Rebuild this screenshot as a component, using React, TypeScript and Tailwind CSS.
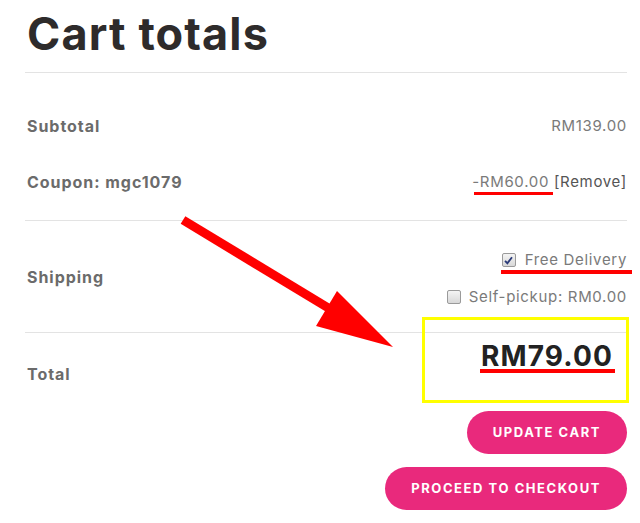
const labelCls = 'text-[16px] font-bold tracking-[0.06em] text-[#6b6b6b]'
const valueCls = 'text-[15px] tracking-[0.045em] text-[#7a7a7a]'

function Checkbox({ checked }: { checked?: boolean }) {
  return (
    <span className="flex h-[14px] w-[14px] items-center justify-center border border-[#9a9a9a] bg-gradient-to-b from-[#f4f4f4] to-[#d8d8d8] rounded-[2px]">
      {checked && (
        <svg viewBox="0 0 12 12" className="h-[11px] w-[11px]">
          <path d="M2.2 6.3 L4.8 9 L9.8 2.4" fill="none" stroke="#2a3a78" strokeWidth="2" />
        </svg>
      )}
    </span>
  )
}

function PinkButton({ children }: { children: React.ReactNode }) {
  return (
    <button className="h-[43px] rounded-full bg-[#e9297c] px-[26px] text-[13px] font-bold uppercase tracking-[0.12em] text-white">
      {children}
    </button>
  )
}

export default function App() {
  return (
    <div
      className="relative h-[523px] w-[640px] overflow-hidden bg-white"
      style={{ fontFamily: 'Inter, "Open Sans", sans-serif' }}
    >
      <div className="pl-[25px] pr-[13px]">
        <div className="flex h-[72px] items-center pl-[2px]">
          <h1 className="text-[45px] font-bold leading-none tracking-[0.025em] text-[#2e2b2b] mt-[-6px]">
            Cart totals
          </h1>
        </div>
        <div className="h-px bg-[#e3e3e3]" />

        <div className="pt-[25px] pb-[10px]">
          <div className="flex h-[56px] items-center justify-between pl-[2px]">
            <span className={labelCls}>Subtotal</span>
            <span className={valueCls}>RM139.00</span>
          </div>
          <div className="flex h-[56px] items-center justify-between pl-[2px]">
            <span className={labelCls}>Coupon: mgc1079</span>
            <span className={valueCls}>
              -RM60.00 <span className="text-[#555]">[Remove]</span>
            </span>
          </div>
        </div>
        <div className="h-px bg-[#e3e3e3]" />

        <div className="flex h-[111px] items-center justify-between pl-[2px]">
          <span className={labelCls}>Shipping</span>
          <div className="flex flex-col items-end gap-[14px] pt-[4px]">
            <label className="flex items-center gap-[9px]">
              <Checkbox checked />
              <span className={valueCls}>Free Delivery</span>
            </label>
            <label className="flex items-center gap-[8px]">
              <Checkbox />
              <span className={valueCls}>Self-pickup: RM0.00</span>
            </label>
          </div>
        </div>
        <div className="h-px bg-[#e3e3e3]" />

        <div className="flex justify-between pl-[2px]">
          <span className={`${labelCls} mt-[29px]`}>Total</span>
          <div className="flex flex-col items-end">
            <span className="mt-[7px] text-[28px] font-bold leading-[32px] tracking-[0.04em] text-[#222] mr-[14px]">RM79.00</span>
            <div className="mt-[39px] flex flex-col items-end gap-[13px]">
              <PinkButton>Update cart</PinkButton>
              <PinkButton>Proceed to checkout</PinkButton>
            </div>
          </div>
        </div>
      </div>

      {/* annotations */}
      <div className="absolute left-[474px] top-[192px] h-[3px] w-[79px] bg-[#ff0000]" />
      <div className="absolute left-[501px] top-[270px] h-[4px] w-[131px] bg-[#ff0000]" />
      <div className="absolute left-[422px] top-[317px] h-[86px] w-[207px] border-[3px] border-[#ffff00]" />
      <div className="absolute left-[480px] top-[369px] h-[4px] w-[135px] bg-[#ff0000]" />
      <svg className="absolute left-0 top-0" width="640" height="523">
        <line x1="183" y1="220" x2="335" y2="312" stroke="#ff0000" strokeWidth="9" />
        <polygon points="393,347 337,291 316,326" fill="#ff0000" />
      </svg>
    </div>
  )
}
